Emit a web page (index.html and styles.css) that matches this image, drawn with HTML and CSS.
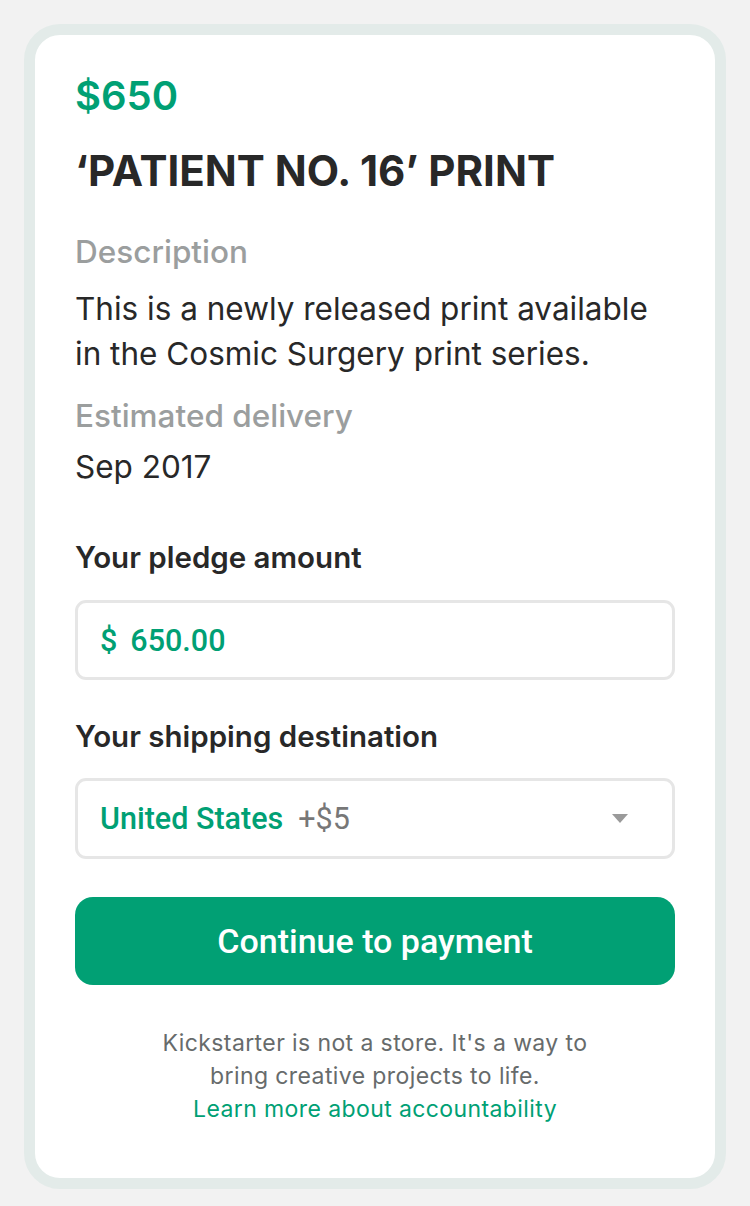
FILE: index.html
```html
<!DOCTYPE html>
<html lang="en">
<head>
<meta charset="utf-8">
<title>Pledge</title>
<link rel="stylesheet" href="styles.css">
</head>
<body>
<div class="card">
  <div class="price">$650</div>
  <h1 class="title">‘PATIENT NO. 16’ PRINT</h1>
  <div class="label">Description</div>
  <p class="body">This is a newly released print available in the Cosmic Surgery print series.</p>
  <div class="label label-delivery">Estimated delivery</div>
  <p class="body body-date">Sep 2017</p>

  <div class="field-label field-label-pledge">Your pledge amount</div>
  <div class="input">
    <span class="cur">$</span><span class="amount">650.00</span>
  </div>

  <div class="field-label field-label-ship">Your shipping destination</div>
  <div class="select">
    <span class="country">United States</span><span class="ship">+$5</span>
    <svg class="caret" width="16" height="9" viewBox="0 0 16 9"><path d="M0 0 H16 L8 9 Z" fill="#9a9a9a"/></svg>
  </div>

  <button class="cta">Continue to payment</button>

  <div class="footer">
    <p>Kickstarter is not a store. It's a way to<br>bring creative projects to life.</p>
    <a class="link" href="#">Learn more about accountability</a>
  </div>
</div>
</body>
</html>
```

FILE: styles.css
```css
* { box-sizing: border-box; }
html, body { margin: 0; padding: 0; }
body {
  background: #f2f2f2;
  padding: 24px 24px 17px;
  font-family: Inter, "Noto Sans", sans-serif;
  color: #282828;
}
.card {
  background: #fff;
  border: 11px solid #e3ebe9;
  border-radius: 36px;
  padding: 37px 40px 40px 40px;
  height: 1165px;
}
.price {
  color: #00a074;
  font-size: 40px;
  font-weight: 600;
  line-height: 48px;
}
.title {
  margin: 26px 0 0;
  font-size: 42px;
  font-weight: 700;
  line-height: 50px;
  letter-spacing: 0;
}
.label {
  margin-top: 36px;
  color: #9b9e9e;
  font-size: 31.5px;
  font-weight: 500;
  line-height: 40px;
}
.label-delivery { margin-top: 20px; }
.body {
  margin: 14px 0 0;
  font-size: 31.5px;
  line-height: 45px;
}
.body-date { margin-top: 8px; }
.field-label {
  margin-top: 48px;
  font-size: 29.5px;
  font-weight: 600;
  line-height: 40px;
}
.field-label-ship { margin-top: 36px; }
.input, .select {
  margin-top: 23px;
  height: 80px;
  border: 3px solid #e6e6e6;
  border-radius: 11px;
  display: flex;
  align-items: center;
  padding: 0 22px;
  font-family: Roboto, sans-serif;
  font-size: 30.5px;
  font-weight: 500;
  color: #00a074;
}
.cur { margin-right: 13px; }
.select { margin-top: 22px; height: 81px; }
.country { margin-right: 15px; }
.ship { color: #777; font-weight: 400; }
.caret { margin-left: auto; margin-right: 22px; }
.cta {
  display: block;
  width: 100%;
  margin-top: 38px;
  height: 88px;
  border: 0;
  border-radius: 18px;
  background: #01a074;
  color: #fff;
  font-family: Roboto, sans-serif;
  font-size: 34px;
  font-weight: 500;
}
.footer {
  margin-top: 42px;
  text-align: center;
  font-size: 23px;
  line-height: 33px;
  letter-spacing: 0.4px;
  color: #676b6b;
}
.footer p { margin: 0; }
.link { color: #00a074; text-decoration: none; }
```
